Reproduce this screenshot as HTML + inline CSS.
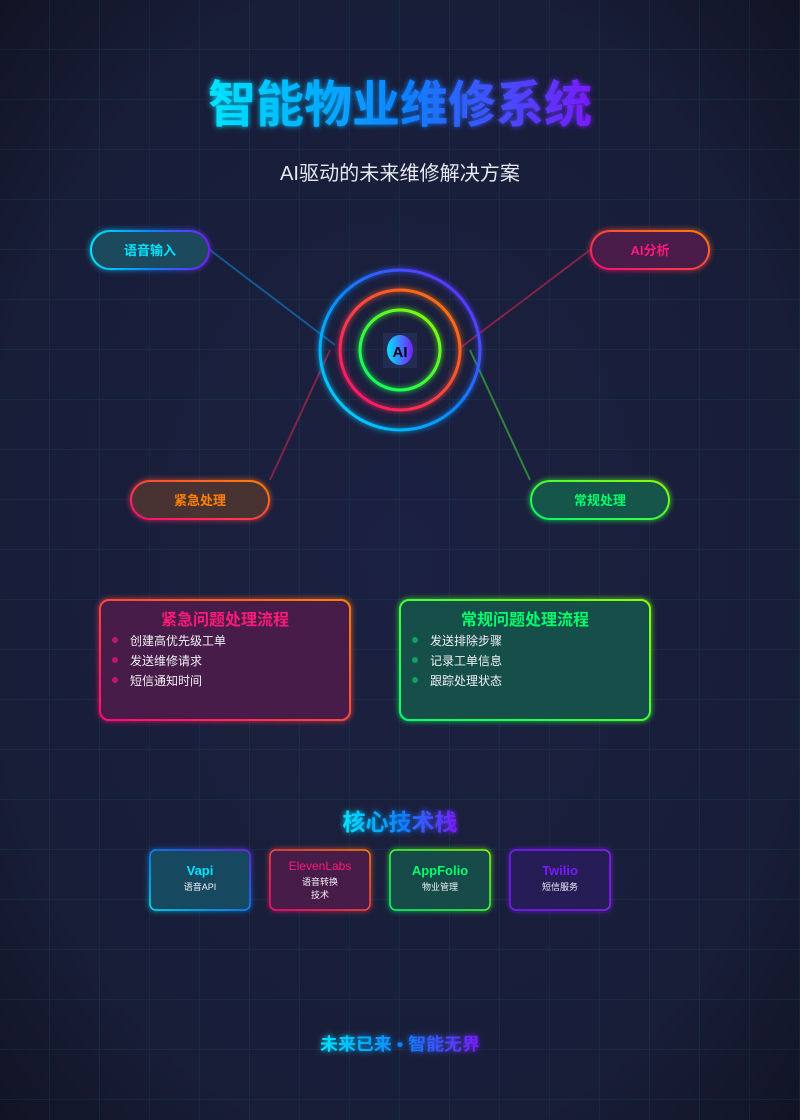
<!DOCTYPE html>
<html><head><meta charset="utf-8"><style>
html,body{margin:0;padding:0;width:800px;height:1120px;overflow:hidden;background:#161a33}
svg{display:block}
text{font-family:"Liberation Sans","Noto Sans CJK SC",sans-serif}
</style></head><body>
<svg width="800" height="1120" viewBox="0 0 800 1120" xmlns="http://www.w3.org/2000/svg">
<defs>
<radialGradient id="bg" cx="50%" cy="50%" r="75%">
<stop offset="0" stop-color="#1b2140"/><stop offset="0.7" stop-color="#181d38"/><stop offset="1" stop-color="#10121f"/></radialGradient>
<pattern id="grid" width="50" height="50" patternUnits="userSpaceOnUse"><path d="M50 0V50M0 50H50" stroke="#1a5060" stroke-opacity="0.5" stroke-width="1" fill="none"/></pattern>
<linearGradient id="cp" x1="0" x2="1" y1="0" y2="0"><stop offset="0" stop-color="#00e5ff"/><stop offset="0.5" stop-color="#0a84ff"/><stop offset="1" stop-color="#7a1bff"/></linearGradient>
<linearGradient id="cpd" x1="0" x2="1" y1="1" y2="0"><stop offset="0" stop-color="#00e5ff"/><stop offset="0.5" stop-color="#0a84ff"/><stop offset="1" stop-color="#7a1bff"/></linearGradient>
<linearGradient id="po" x1="0" x2="1" y1="1" y2="0"><stop offset="0" stop-color="#ff0a78"/><stop offset="1" stop-color="#ff8000"/></linearGradient>
<linearGradient id="gg" x1="0" x2="1" y1="1" y2="0"><stop offset="0" stop-color="#00ff6a"/><stop offset="1" stop-color="#8aff00"/></linearGradient>
<linearGradient id="pp" x1="0" x2="1"><stop offset="0" stop-color="#7a1bff"/><stop offset="1" stop-color="#8a20ff"/></linearGradient>
<linearGradient id="ai" x1="0" x2="1"><stop offset="0" stop-color="#00e5ff"/><stop offset="1" stop-color="#7a1bff"/></linearGradient>
<filter id="glow" x="-30%" y="-30%" width="160%" height="160%"><feGaussianBlur stdDeviation="3" result="b"/><feMerge><feMergeNode in="b"/><feMergeNode in="SourceGraphic"/></feMerge></filter>
</defs>
<rect width="800" height="1120" fill="url(#bg)"/>
<rect width="800" height="1120" fill="url(#grid)"/>

<text x="400" y="122" text-anchor="middle" font-size="50" font-weight="bold" fill="url(#cp)" filter="url(#glow)" textLength="384" lengthAdjust="spacingAndGlyphs">智能物业维修系统</text>
<text x="400" y="180" text-anchor="middle" font-size="20" fill="#e6e8f0" textLength="240" lengthAdjust="spacingAndGlyphs">AI驱动的未来维修解决方案</text>

<g stroke-width="2" opacity="0.45">
<line x1="210" y1="250" x2="335" y2="345" stroke="#0a9fff"/>
<line x1="590" y1="250" x2="460" y2="348" stroke="#ff2a5a"/>
<line x1="330" y1="350" x2="270" y2="480" stroke="#ff2a5a"/>
<line x1="470" y1="350" x2="530" y2="480" stroke="#4cff3a"/>
</g>

<g filter="url(#glow)" fill="none" stroke-width="3">
<circle cx="400" cy="350" r="80" stroke="url(#cpd)"/>
<circle cx="400" cy="350" r="60" stroke="url(#po)"/>
<circle cx="400" cy="350" r="40" stroke="url(#gg)"/>
</g>
<rect x="383" y="333" width="34" height="35" fill="#2a3560" opacity="0.6"/>
<ellipse cx="400" cy="350" rx="13" ry="15" fill="url(#ai)"/>
<text x="400" y="357" text-anchor="middle" font-size="15" font-weight="bold" style="fill:#050510">AI</text>

<g filter="url(#glow)" stroke-width="2">
<rect x="91" y="231" width="118" height="38" rx="19" fill="#1c4a5c" stroke="url(#cp)"/>
<rect x="591" y="231" width="118" height="38" rx="19" fill="#4a1d48" stroke="url(#po)"/>
<rect x="131" y="481" width="138" height="38" rx="19" fill="#4a3232" stroke="url(#po)"/>
<rect x="531" y="481" width="138" height="38" rx="19" fill="#185548" stroke="url(#gg)"/>
</g>
<g font-size="13" font-weight="bold" text-anchor="middle">
<text x="150" y="255" fill="#00e5ff">语音输入</text>
<text x="650" y="255" fill="#ff1a7a">AI分析</text>
<text x="200" y="505" fill="#ff8000">紧急处理</text>
<text x="600" y="505" fill="#00ff6a">常规处理</text>
</g>

<g filter="url(#glow)" stroke-width="2">
<rect x="100" y="600" width="250" height="120" rx="9" fill="#471a48" stroke="url(#po)"/>
<rect x="400" y="600" width="250" height="120" rx="9" fill="#17504a" stroke="url(#gg)"/>
</g>
<text x="225" y="625" text-anchor="middle" font-size="16" font-weight="bold" fill="#ff1a7a">紧急问题处理流程</text>
<text x="525" y="625" text-anchor="middle" font-size="16" font-weight="bold" fill="#00ff6a">常规问题处理流程</text>
<g fill="#c01868"><circle cx="115" cy="640" r="3"/><circle cx="115" cy="660" r="3"/><circle cx="115" cy="680" r="3"/></g>
<g fill="#10a060"><circle cx="415" cy="640" r="3"/><circle cx="415" cy="660" r="3"/><circle cx="415" cy="680" r="3"/></g>
<g font-size="12" fill="#f0f0f5">
<text x="130" y="645">创建高优先级工单</text>
<text x="130" y="665">发送维修请求</text>
<text x="130" y="685">短信通知时间</text>
<text x="430" y="645">发送排除步骤</text>
<text x="430" y="665">记录工单信息</text>
<text x="430" y="685">跟踪处理状态</text>
</g>

<text x="400" y="830" text-anchor="middle" font-size="23" font-weight="bold" fill="url(#cp)" filter="url(#glow)">核心技术栈</text>

<g stroke-width="1.5" filter="url(#glow)">
<rect x="150" y="850" width="100" height="60" rx="6" fill="#184a60" stroke="url(#cpd)"/>
<rect x="270" y="850" width="100" height="60" rx="6" fill="#461a48" stroke="url(#po)"/>
<rect x="390" y="850" width="100" height="60" rx="6" fill="#174b48" stroke="url(#gg)"/>
<rect x="510" y="850" width="100" height="60" rx="6" fill="#261e56" stroke="url(#pp)"/>
</g>
<g text-anchor="middle">
<text x="200" y="875" font-size="13" font-weight="bold" fill="#00e5ff">Vapi</text>
<text x="200" y="890" font-size="9" fill="#f0f0f5">语音API</text>
<text x="320" y="870" font-size="12" fill="#ff1a7a">ElevenLabs</text>
<text x="320" y="885" font-size="9" fill="#f0f0f5">语音转换</text>
<text x="320" y="898" font-size="9" fill="#f0f0f5">技术</text>
<text x="440" y="875" font-size="13" font-weight="bold" fill="#00ff6a">AppFolio</text>
<text x="440" y="890" font-size="9" fill="#f0f0f5">物业管理</text>
<text x="560" y="875" font-size="13" font-weight="bold" fill="#7a1bff">Twilio</text>
<text x="560" y="890" font-size="9" fill="#f0f0f5">短信服务</text>
</g>

<text x="400" y="1050" text-anchor="middle" font-size="17" font-weight="bold" fill="url(#cp)" filter="url(#glow)" textLength="160" lengthAdjust="spacingAndGlyphs">未来已来 • 智能无界</text>
</svg>
</body></html>
